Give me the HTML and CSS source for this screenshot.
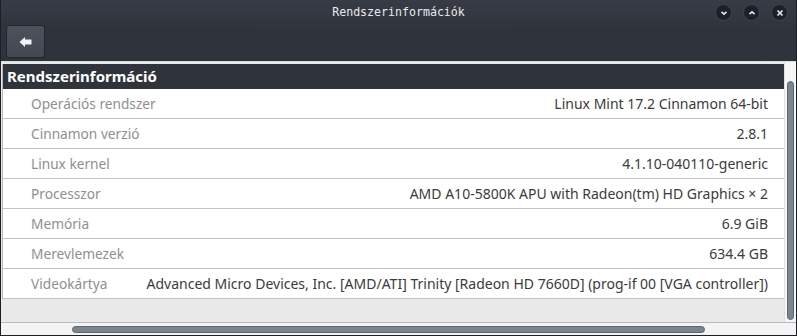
FILE: index.html
```html
<!DOCTYPE html>
<html lang="hu">
<head>
<meta charset="utf-8">
<title>Rendszerinformációk</title>
<link rel="stylesheet" href="styles.css">
</head>
<body>
<div class="window">
  <div class="titlebar">
    <div class="title">Rendszerinformációk</div>
    <div class="wm-buttons">
      <span class="wm-btn"><svg width="8" height="8" viewBox="0 0 8 8"><path d="M1.5 2.8 L4 5.2 L6.5 2.8" fill="none" stroke="#e6e8eb" stroke-width="1.6"/></svg></span>
      <span class="wm-btn"><svg width="8" height="8" viewBox="0 0 8 8"><path d="M1.5 5.2 L4 2.8 L6.5 5.2" fill="none" stroke="#e6e8eb" stroke-width="1.6"/></svg></span>
      <span class="wm-btn"><svg width="8" height="8" viewBox="0 0 8 8"><path d="M1.5 1.5 L6.5 6.5 M6.5 1.5 L1.5 6.5" fill="none" stroke="#e6e8eb" stroke-width="1.7"/></svg></span>
    </div>
  </div>
  <div class="toolbar">
    <button class="back-btn" type="button" aria-label="Vissza">
      <svg width="14" height="12" viewBox="0 0 14 12"><path d="M0.5 6 L6 1 L6 3.5 L12.5 3.5 L12.5 8.5 L6 8.5 L6 11 Z" fill="#f2f3f5"/></svg>
    </button>
  </div>
  <div class="content">
    <div class="main">
      <div class="list">
        <div class="header">Rendszerinformáció</div>
        <div class="row"><span class="label">Operációs rendszer</span><span class="value">Linux Mint 17.2 Cinnamon 64-bit</span></div>
        <div class="row"><span class="label">Cinnamon verzió</span><span class="value">2.8.1</span></div>
        <div class="row"><span class="label">Linux kernel</span><span class="value">4.1.10-040110-generic</span></div>
        <div class="row"><span class="label">Processzor</span><span class="value">AMD A10-5800K APU with Radeon(tm) HD Graphics × 2</span></div>
        <div class="row"><span class="label">Memória</span><span class="value">6.9 GiB</span></div>
        <div class="row"><span class="label">Merevlemezek</span><span class="value">634.4 GB</span></div>
        <div class="row"><span class="label">Videokártya</span><span class="value">Advanced Micro Devices, Inc. [AMD/ATI] Trinity [Radeon HD 7660D] (prog-if 00 [VGA controller])</span></div>
      </div>
      <div class="vtrack"><div class="vthumb"></div></div>
    </div>
    <div class="htrack"><div class="hthumb"></div></div>
  </div>
</div>
</body>
</html>
```

FILE: styles.css
```css
* { box-sizing: border-box; }
html, body { margin: 0; padding: 0; }
body {
  width: 797px;
  height: 336px;
  overflow: hidden;
  background: #2a2e35;
  font-family: "Noto Sans", "DejaVu Sans", sans-serif;
}
.window {
  width: 797px;
  height: 336px;
  display: flex;
  flex-direction: column;
  background: linear-gradient(#363b45, #2f343c 30px, #2d323a);
  border: 1px solid #1c1f24;
  border-top: none;
}
.titlebar {
  height: 24px;
  position: relative;
  display: flex;
  align-items: center;
  justify-content: center;
}
.title {
  font-family: "DejaVu Sans Mono", monospace;
  font-size: 11.6px;
  color: #e8eaed;
  margin-top: -1px;
}
.wm-buttons {
  position: absolute;
  right: 8px;
  top: 4px;
  display: flex;
  gap: 11px;
}
.wm-btn {
  width: 17px;
  height: 17px;
  border-radius: 50%;
  background: #1d2127;
  border: 1px solid #3f454f;
  display: flex;
  align-items: center;
  justify-content: center;
}
.toolbar {
  height: 37px;
  padding: 0 0 0 5px;
  display: flex;
  align-items: flex-start;
}
.back-btn {
  width: 39px;
  height: 33px;
  margin-top: 1px;
  border-radius: 3px;
  border: 1px solid #23272d;
  background: linear-gradient(#4c515c, #434852);
  display: flex;
  align-items: center;
  justify-content: center;
  padding: 0;
}
.content {
  flex: 1;
  display: flex;
  flex-direction: column;
  background: #e9e9e9;
  border-top: 1px solid #dcdcdc;
}
.main {
  flex: 1;
  display: flex;
  padding-top: 2px;
}
.list {
  flex: 1;
  margin-left: 1px;
  border-left: 1px solid #b8b8b8;
  align-self: flex-start;
}
.header {
  height: 25px;
  background: #2f343c;
  color: #ffffff;
  font-weight: bold;
  font-size: 15px;
  padding-left: 4px;
  line-height: 25px;
}
.row {
  height: 30px;
  background: #ffffff;
  border-bottom: 1px solid #c3c3c3;
  display: flex;
  align-items: center;
  justify-content: space-between;
  padding: 0 16px 0 28px;
  font-size: 14px;
}
.label { color: #8f8f8f; white-space: nowrap; font-size: 13.7px; }
.value { color: #3b3b3b; white-space: nowrap; }
.vtrack {
  width: 12px;
  background: #f6f6f6;
  border-left: 1px solid #dedede;
  padding: 19px 0 0 2px;
  margin-top: -2px;
}
.vthumb {
  width: 7px;
  height: 239px;
  border-radius: 4px;
  background: #7b858f;
  border: 1px solid #5d666f;
}
.htrack {
  height: 13px;
  background: #f4f4f4;
  border-top: 1px solid #b9b9b9;
  padding: 3px 0 0 71px;
}
.hthumb {
  width: 633px;
  height: 7px;
  border-radius: 4px;
  background: #7b858f;
  border: 1px solid #5d666f;
}
```
